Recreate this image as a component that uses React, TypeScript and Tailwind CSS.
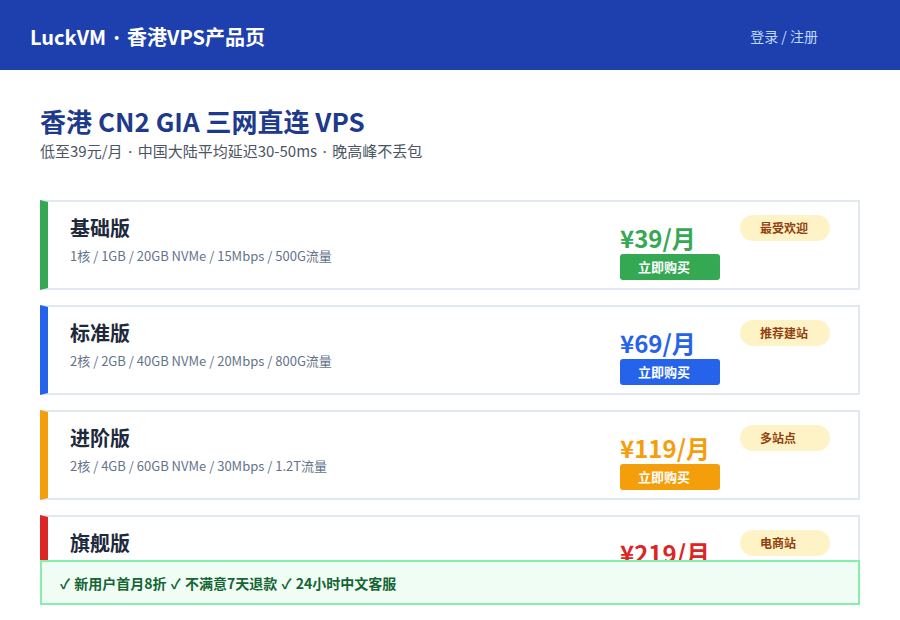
import React from 'react';

type Plan = {
    name: string;
    specs: string;
    price: string;
    badge: string;
    bar: string;
    text: string;
    btn: string;
};

const plans: Plan[] = [
    {
        name: '基础版',
        specs: '1核 / 1GB / 20GB NVMe / 15Mbps / 500G流量',
        price: '¥39/月',
        badge: '最受欢迎',
        bar: 'border-l-[#34a853]',
        text: 'text-[#34a853]',
        btn: 'bg-[#34a853]',
    },
    {
        name: '标准版',
        specs: '2核 / 2GB / 40GB NVMe / 20Mbps / 800G流量',
        price: '¥69/月',
        badge: '推荐建站',
        bar: 'border-l-[#2563eb]',
        text: 'text-[#2563eb]',
        btn: 'bg-[#2563eb]',
    },
    {
        name: '进阶版',
        specs: '2核 / 4GB / 60GB NVMe / 30Mbps / 1.2T流量',
        price: '¥119/月',
        badge: '多站点',
        bar: 'border-l-[#f59e0b]',
        text: 'text-[#f59e0b]',
        btn: 'bg-[#f59e0b]',
    },
    {
        name: '旗舰版',
        specs: '4核 / 8GB / 100GB NVMe / 50Mbps / 2T流量',
        price: '¥219/月',
        badge: '电商站',
        bar: 'border-l-[#dc2626]',
        text: 'text-[#dc2626]',
        btn: 'bg-[#dc2626]',
    },
];

// narrow middle dot, like the reference
const Dot = () => <span className="font-['Noto_Sans_CJK_JP',sans-serif]">·</span>;

const Check = () => <span className="px-[1px]">✓</span>;

const PlanCard: React.FC<{ plan: Plan }> = ({ plan }) => (
    <div className={`flex h-[90px] border-2 border-[#e2e8f0] border-l-8 bg-white ${plan.bar}`}>
        <div className="flex-1 pl-[22px] pt-[11px]">
            <h3 className="text-[20px] leading-[30px] font-bold text-[#1e293b]">{plan.name}</h3>
            <p className="mt-[4px] text-[13px] leading-[18px] text-[#64748b]">{plan.specs}</p>
        </div>
        <div className="w-[100px] pt-[20px] flex flex-col">
            <div className={`text-[24px] leading-[32px] font-bold ${plan.text}`}>{plan.price}</div>
            <button className={`h-[26px] w-[100px] rounded-[3px] pl-[18px] text-left text-[13px] font-bold text-white ${plan.btn}`}>
                立即购买
            </button>
        </div>
        <div className="ml-[20px] mr-[28px] pt-[13px]">
            <span className="flex h-[26px] w-[90px] items-center rounded-full bg-[#fef3c7] pl-[20px] text-[12px] font-bold text-[#92400e]">
                {plan.badge}
            </span>
        </div>
    </div>
);

const App: React.FC = () => (
    <div className="min-h-screen bg-white font-['Noto_Sans_CJK_SC','Noto_Sans',sans-serif]">
        <header className="flex h-[70px] items-center justify-between bg-[#1e40af] pl-[30px] pr-[82px]">
            <h1 className="pt-[3px] text-[20px] font-bold text-white">
                LuckVM <Dot /> 香港VPS产品页
            </h1>
            <a className="pt-[2px] text-[14px] text-[#bfdbfe]">登录 / 注册</a>
        </header>

        <main className="px-[40px] pt-[33px]">
            <h2 className="text-[26px] leading-[36px] font-bold text-[#1e3a8a]">香港 CN2 GIA 三网直连 VPS</h2>
            <p className="mt-[1px] text-[15px] leading-[22px] text-[#4b5563]">
                低至39元/月 <Dot /> 中国大陆平均延迟30-50ms <Dot /> 晚高峰不丢包
            </p>

            <div className="mt-[38px] flex flex-col gap-[15px] pb-[10px]">
                {plans.map(p => (
                    <PlanCard key={p.name} plan={p} />
                ))}
            </div>
        </main>

        <div className="fixed bottom-[15px] left-[40px] right-[40px] flex h-[45px] items-center border-2 border-[#86efac] bg-[#f0fdf4] pl-[17px] pt-[1px] text-[14px] font-bold text-[#166534]">
            <span>
                <Check /> 新用户首月8折 <Check /> 不满意7天退款 <Check /> 24小时中文客服
            </span>
        </div>
    </div>
);

export default App;
